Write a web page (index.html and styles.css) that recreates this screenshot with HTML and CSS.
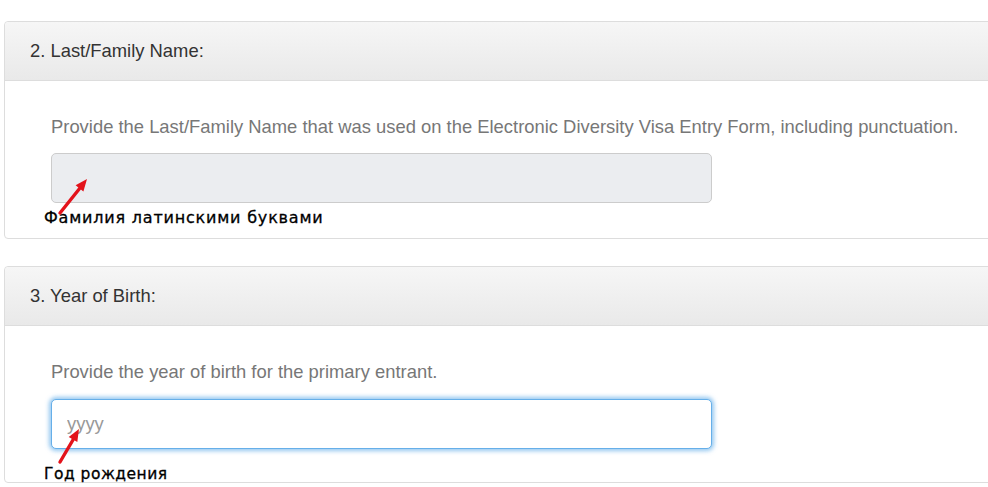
FILE: index.html
```html
<!DOCTYPE html>
<html lang="en">
<head>
<meta charset="utf-8">
<title>DV Entrant Form</title>
<link rel="stylesheet" href="styles.css">
</head>
<body>
<div class="page">
  <section class="panel">
    <div class="panel-heading">2. Last/Family Name:</div>
    <div class="panel-body">
      <p class="help">Provide the Last/Family Name that was used on the Electronic Diversity Visa Entry Form, including punctuation.</p>
      <input class="field field-disabled" type="text" disabled>
      <div class="note note-first">Фамилия латинскими буквами</div>
      <svg class="arrow arrow-first" width="40" height="46" viewBox="0 0 40 46">
        <line x1="5" y1="40" x2="25" y2="15" stroke="#e3131b" stroke-width="3.4" stroke-linecap="round"/>
        <polygon points="32,6 28.4,18.5 20.6,12.3" fill="#e3131b"/>
      </svg>
    </div>
  </section>
  <section class="panel">
    <div class="panel-heading">3. Year of Birth:</div>
    <div class="panel-body body-second">
      <p class="help">Provide the year of birth for the primary entrant.</p>
      <input class="field field-focus" type="text" placeholder="yyyy">
      <div class="note note-second">Год рождения</div>
      <svg class="arrow arrow-second" width="40" height="46" viewBox="0 0 40 46">
        <line x1="5" y1="39" x2="18.5" y2="16" stroke="#e3131b" stroke-width="3.4" stroke-linecap="round"/>
        <polygon points="24,6 22.3,18.9 13.7,13.9" fill="#e3131b"/>
      </svg>
    </div>
  </section>
</div>
</body>
</html>
```

FILE: styles.css
```css
html, body {
  margin: 0;
  padding: 0;
  background: #ffffff;
  overflow: hidden;
}

.page {
  display: flex;
  flex-direction: column;
  gap: 27px;
  padding: 21px 0 0 4px;
  font-family: "Liberation Sans", Arial, sans-serif;
}

.panel {
  width: 1010px;
  border: 1px solid #dddddd;
  border-radius: 4px;
  background: #ffffff;
  box-sizing: border-box;
}

.panel-heading {
  height: 58px;
  line-height: 58px;
  padding-left: 25px;
  font-size: 18.4px;
  color: #333333;
  background: linear-gradient(#f6f6f6, #e9e9e9);
  border-bottom: 1px solid #dddddd;
  border-radius: 4px 4px 0 0;
}

.panel-body {
  position: relative;
  padding: 35px 0 10px 46px;
}

.body-second .help {
  margin-bottom: 16px;
}

.help {
  margin: 0 0 15px 0;
  font-size: 18.4px;
  line-height: 22px;
  color: #777777;
}

.field {
  display: block;
  box-sizing: border-box;
  width: 661px;
  height: 50px;
  margin: 0;
  padding: 0 15px;
  font-family: "Liberation Sans", Arial, sans-serif;
  font-size: 18.4px;
  border-radius: 5px;
  outline: none;
}

.field-disabled {
  background: #ebedf0;
  border: 1px solid #cccccc;
}

.field-focus {
  background: #ffffff;
  border: 1px solid #66afe9;
  box-shadow: 0 0 4px 2px rgba(102, 175, 233, 0.7);
}

.field-focus::placeholder {
  color: #999999;
}

.note {
  font-family: "DejaVu Sans", Verdana, sans-serif;
  line-height: 20px;
  color: #000000;
  margin-left: -7px;
  -webkit-text-stroke: 0.3px #000000;
}

.note-first {
  margin-top: 5px;
  font-size: 16px;
  letter-spacing: 0.8px;
}

.note-second {
  margin-top: 15px;
  margin-bottom: -12px;
  font-size: 15.5px;
  letter-spacing: 0.5px;
}

.arrow {
  position: absolute;
  left: 50px;
}

.arrow-first {
  top: 92px;
}

.arrow-second {
  top: 97px;
}
```
